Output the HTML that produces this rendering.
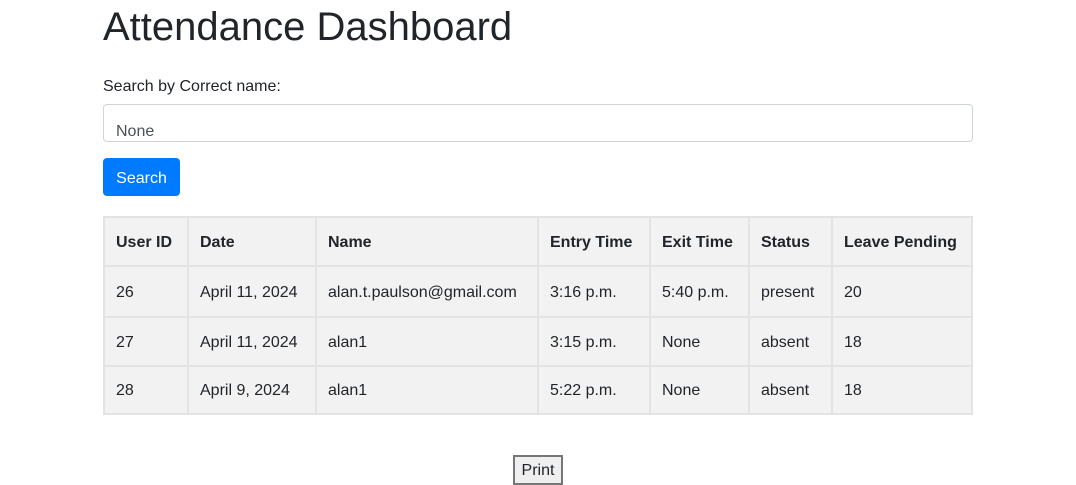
<!DOCTYPE html><html><head><style>
body{margin:0;font-family:"Liberation Sans",sans-serif;color:#212529;width:1076px;height:484px;overflow:hidden;background:#fff;position:relative}
h1{position:absolute;left:103px;top:5px;margin:0;font-size:40px;font-weight:500}
.lbl{position:absolute;left:103px;top:78px;font-size:16px}
.inp{position:absolute;left:103px;top:104px;width:868px;height:36px;border:1px solid #ced4da;border-radius:4px;font-size:16px;color:#495057}
.inp span{position:absolute;left:12px;top:18px}
.btn{position:absolute;left:103px;top:158px;width:77px;height:38px;background:#007bff;border-radius:4px;color:#fff;font-size:16px;line-height:42px;text-align:center}
table{position:absolute;left:103px;top:216px;border-collapse:collapse;background:#f2f2f2;font-size:16px;table-layout:fixed;width:868px}
td,th{border:2px solid #e3e3e3;padding:2px 11px 0;text-align:left}
th{font-weight:bold;height:45px}
.pr{position:absolute;left:513px;top:455px;width:46px;height:26px;border:2px solid #767676;background:#efefef;font-size:16px;line-height:28px;text-align:center}
</style></head><body>
<h1>Attendance Dashboard</h1>
<div class="lbl">Search by Correct name:</div>
<div class="inp"><span>None</span></div>
<div class="btn">Search</div>
<table>
<colgroup><col style="width:84px"><col style="width:128px"><col style="width:222px"><col style="width:112px"><col style="width:99px"><col style="width:83px"><col style="width:140px"></colgroup>
<tr><th>User ID</th><th>Date</th><th>Name</th><th>Entry Time</th><th>Exit Time</th><th>Status</th><th>Leave Pending</th></tr>
<tr><td style="height:47px">26</td><td>April 11, 2024</td><td>alan.t.paulson@gmail.com</td><td>3:16 p.m.</td><td>5:40 p.m.</td><td>present</td><td>20</td></tr>
<tr><td style="height:45px">27</td><td>April 11, 2024</td><td>alan1</td><td>3:15 p.m.</td><td>None</td><td>absent</td><td>18</td></tr>
<tr><td style="height:44px">28</td><td>April 9, 2024</td><td>alan1</td><td>5:22 p.m.</td><td>None</td><td>absent</td><td>18</td></tr>
</table>
<div class="pr">Print</div>
</body></html>
